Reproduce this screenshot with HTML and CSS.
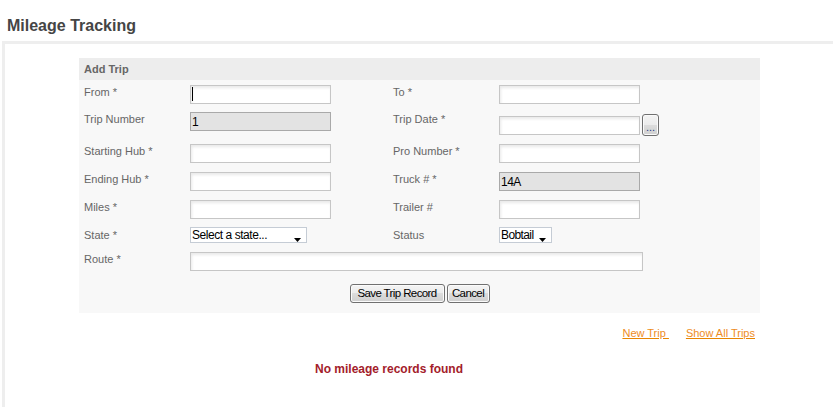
FILE: index.html
```html
<!DOCTYPE html>
<html>
<head>
<meta charset="utf-8">
<title>Mileage Tracking</title>
<link rel="stylesheet" href="styles.css">
</head>
<body>
<h1 class="page-title">Mileage Tracking</h1>
<div class="panel">
  <div class="trip-box">
    <div class="trip-head">Add Trip</div>
    <div class="trip-body">
      <div class="grid">
        <label class="lbl">From *</label>
        <div class="cell"><span class="field-wrap"><input class="txt" type="text"><span class="caret"></span></span></div>
        <label class="lbl">To *</label>
        <div class="cell"><input class="txt" type="text"></div>

        <label class="lbl">Trip Number</label>
        <div class="cell"><input class="txt ro" type="text" value="1" readonly></div>
        <label class="lbl">Trip Date *</label>
        <div class="cell date-cell"><input class="txt date" type="text"><button class="pick" type="button">...</button></div>

        <label class="lbl">Starting Hub *</label>
        <div class="cell"><input class="txt" type="text"></div>
        <label class="lbl">Pro Number *</label>
        <div class="cell"><input class="txt" type="text"></div>

        <label class="lbl">Ending Hub *</label>
        <div class="cell"><input class="txt" type="text"></div>
        <label class="lbl">Truck # *</label>
        <div class="cell"><input class="txt ro" type="text" value="14A" readonly></div>

        <label class="lbl">Miles *</label>
        <div class="cell"><input class="txt" type="text"></div>
        <label class="lbl">Trailer #</label>
        <div class="cell"><input class="txt" type="text"></div>

        <label class="lbl lbl-sel">State *</label>
        <div class="cell"><span class="sel sel-state"><select><option>Select a state...</option></select><svg class="arrow" width="7" height="4" viewBox="0 0 7 4"><polygon points="0,0 7,0 3.5,4" fill="#000"/></svg></span></div>
        <label class="lbl lbl-sel">Status</label>
        <div class="cell"><span class="sel sel-status"><select><option>Bobtail</option></select><svg class="arrow" width="7" height="4" viewBox="0 0 7 4"><polygon points="0,0 7,0 3.5,4" fill="#000"/></svg></span></div>

        <label class="lbl">Route *</label>
        <div class="cell span3"><input class="txt route" type="text"></div>
      </div>
      <div class="actions">
        <button class="btn btn-save" type="button">Save Trip Record</button>
        <button class="btn btn-cancel" type="button">Cancel</button>
      </div>
    </div>
  </div>
  <div class="links">
    <a href="#" class="lnk">New Trip&nbsp;</a>
    <a href="#" class="lnk">Show All Trips</a>
  </div>
  <div class="empty">No mileage records found</div>
</div>
</body>
</html>
```

FILE: styles.css
```css
html, body {
  margin: 0;
  padding: 0;
  background: #fff;
  font-family: "Liberation Sans", Arial, sans-serif;
}

.page-title {
  margin: 0;
  padding: 17px 0 0 7px;
  font: bold 16px/18px "Liberation Sans", Arial, sans-serif;
  color: #454545;
}

.panel {
  margin: 6px 0 0 2px;
  border-top: 3px solid #eeeeee;
  border-left: 3px solid #eeeeee;
  min-height: 380px;
}

.trip-box {
  margin: 14px 0 0 74px;
  width: 681px;
  background: #f8f8f8;
}

.trip-head {
  height: 22px;
  padding-left: 5px;
  background: #ededed;
  font: bold 11px/22px "Liberation Sans", Arial, sans-serif;
  color: #666;
}

.trip-body {
  padding: 5px 0 10px 0;
}

.grid {
  display: grid;
  padding-left: 5px;
  grid-template-columns: 106px 203px 106px 1fr;
  grid-template-rows: 27px 32px 28px 28px 27px 25px 19px;
  align-items: start;
}

.lbl {
  display: block;
  padding-top: 1px;
  font: 11px/13px "Liberation Sans", Arial, sans-serif;
  color: #666;
}

.lbl-sel {
  padding-top: 2px;
}

.cell {
  display: flex;
  align-items: flex-start;
}

.span3 {
  grid-column: 2 / span 3;
}

.field-wrap {
  position: relative;
  display: inline-block;
}

.caret {
  position: absolute;
  left: 2px;
  top: 2px;
  width: 1px;
  height: 14px;
  background: #000;
}

.txt {
  box-sizing: border-box;
  display: block;
  width: 141px;
  height: 19px;
  margin: 0;
  padding: 0 2px;
  border: 1px solid #c6c6c6;
  border-radius: 0;
  background: #fff;
  box-shadow: inset 1px 2px 3px rgba(0, 0, 0, 0.09);
  font: 12px "Liberation Sans", Arial, sans-serif;
  letter-spacing: -0.5px;
  color: #000;
  outline: none;
}

.txt.ro {
  background: #e3e3e3;
  border-color: #a9a9a9;
  box-shadow: none;
  padding-left: 1px;
}

.txt.route {
  width: 453px;
}

.date-cell .txt.date {
  margin-top: 4px;
}

.pick {
  box-sizing: border-box;
  margin: 2px 0 0 2px;
  width: 17px;
  height: 22px;
  padding: 3px 0 0 0;
  border: 1px solid #707070;
  border-radius: 3px;
  background: linear-gradient(#f4f4f4, #ebebeb 50%, #dcdcdc 50%, #d0d0d0);
  box-shadow: inset 0 0 0 1px #fbfbfb;
  font: 11px/12px "Liberation Sans", Arial, sans-serif;
  color: #233c86;
}

.sel {
  position: relative;
  display: inline-block;
}

.sel select {
  -webkit-appearance: none;
  appearance: none;
  box-sizing: border-box;
  display: block;
  height: 16px;
  margin: 0;
  padding: 0 0 0 1px;
  border: 1px solid #c5ccd5;
  border-radius: 0;
  background: #fff;
  font: 12px/14px "Liberation Sans", Arial, sans-serif;
  letter-spacing: -0.45px;
  color: #000;
  outline: none;
}

.sel-state select {
  width: 117px;
}

.sel-status select {
  width: 53px;
  letter-spacing: -0.6px;
}

.arrow {
  position: absolute;
  right: 6px;
  top: 11px;
  display: block;
}

.actions {
  display: flex;
  justify-content: center;
  gap: 2px;
  margin-top: 13px;
}

.btn {
  box-sizing: border-box;
  height: 19px;
  margin: 0;
  padding: 0;
  border: 1px solid #707070;
  border-radius: 3px;
  background: linear-gradient(#f4f4f4, #ebebeb 50%, #dcdcdc 50%, #cfcfcf);
  box-shadow: inset 0 0 0 1px #fbfbfb;
  font: 11.5px/15px "Liberation Sans", Arial, sans-serif;
  letter-spacing: -0.6px;
  color: #000;
}

.btn-save {
  width: 95px;
}

.btn-cancel {
  width: 43px;
}

.links {
  box-sizing: border-box;
  display: flex;
  justify-content: flex-end;
  gap: 17px;
  width: 681px;
  margin: 14px 0 0 74px;
  padding-right: 5px;
  font: 11px/13px "Liberation Sans", Arial, sans-serif;
}

.lnk {
  color: #ee8c1e;
  text-decoration: underline;
  text-decoration-color: #e88500;
}

.empty {
  margin: 22px 0 0 310px;
  font: bold 12px/14px "Liberation Sans", Arial, sans-serif;
  color: #a3202a;
}
```
